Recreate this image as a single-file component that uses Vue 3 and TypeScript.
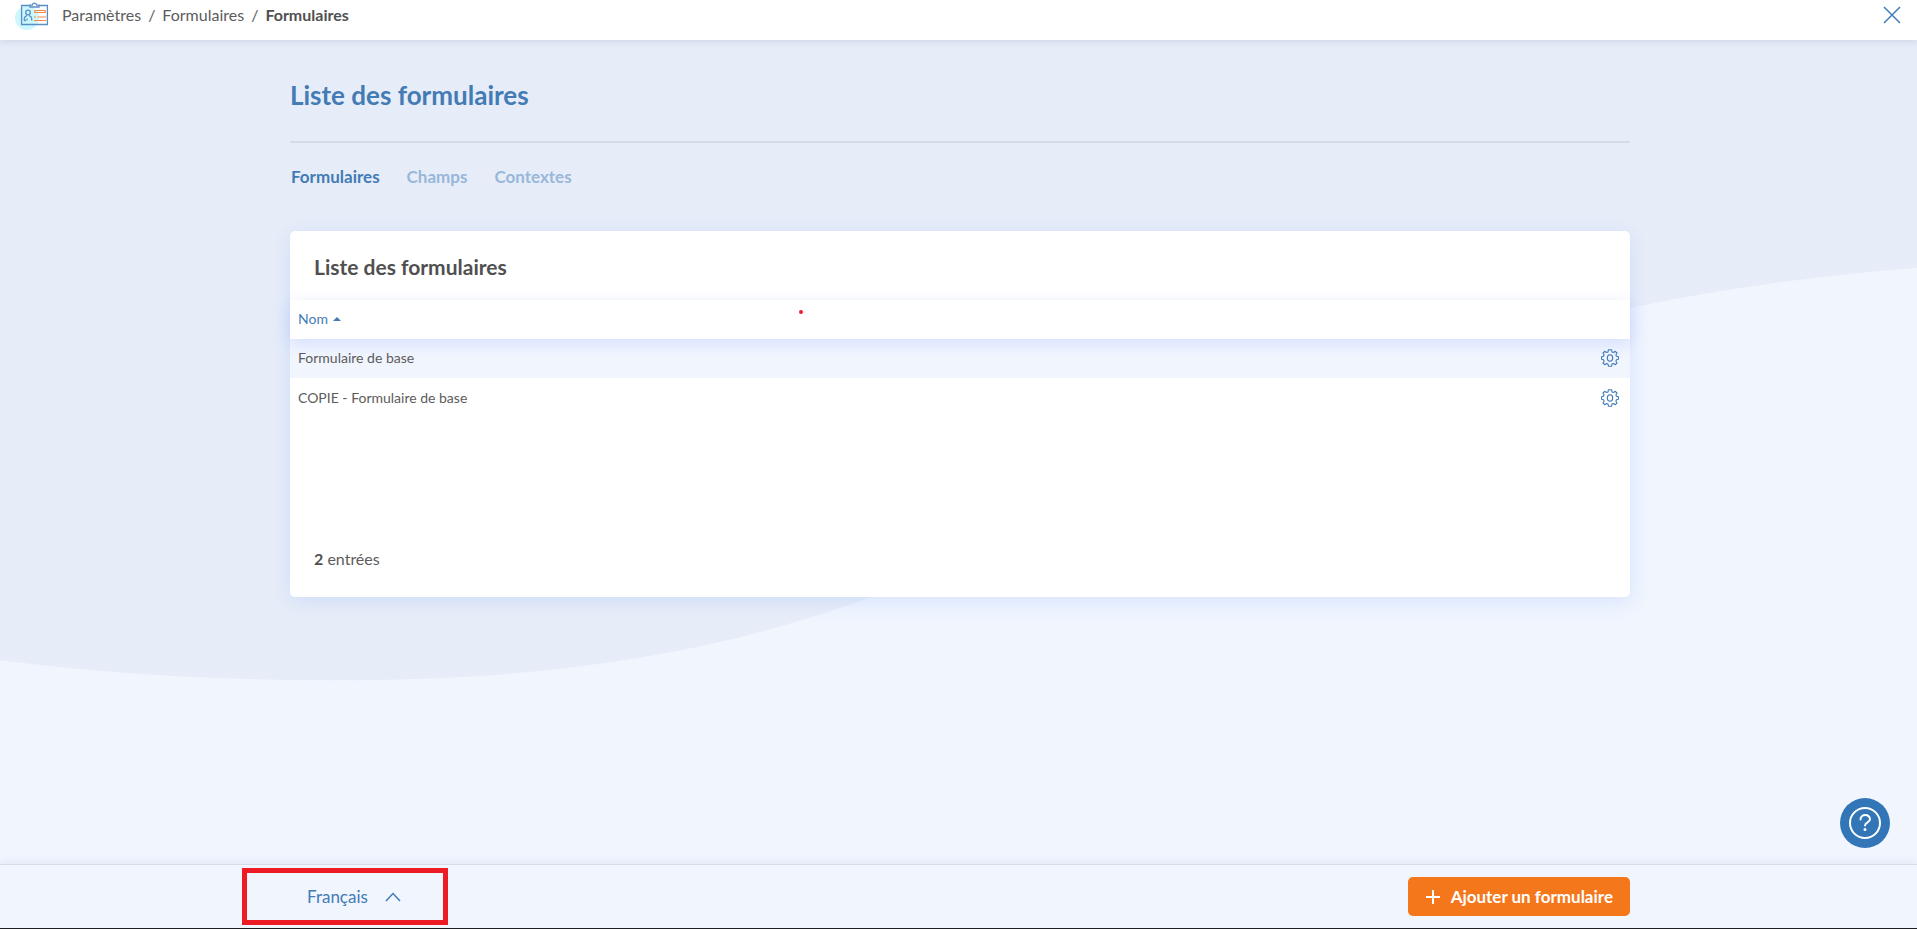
<script setup lang="ts">
import { ref, computed } from 'vue'

interface FormEntry {
  id: number
  name: string
}

const crumbs: string[] = ['Paramètres', 'Formulaires']
const tabs: string[] = ['Formulaires', 'Champs', 'Contextes']
const activeTab = ref<string>('Formulaires')
const language = ref<string>('fr')
const ascending = ref<boolean>(true)

const forms = ref<FormEntry[]>([
  { id: 1, name: 'Formulaire de base' },
  { id: 2, name: 'COPIE - Formulaire de base' },
])

const rows = computed<FormEntry[]>(() =>
  [...forms.value].sort((a, b) => (ascending.value ? a.id - b.id : b.id - a.id)),
)
</script>

<template>
  <div class="page">
    <svg class="wave" viewBox="0 0 1917 929" preserveAspectRatio="none" aria-hidden="true">
      <path d="M0 0H1917V268C1820 276 1727 288 1631 308C1330 371 1120 505 873 597C690 665 510 681 333 681C220 681 110 675 0 661Z" />
    </svg>

    <header class="topbar">
      <svg class="logo" viewBox="0 0 34 30" aria-hidden="true">
        <circle cx="12" cy="18" r="12" fill="#cdf6fd" />
        <g fill="none" stroke="#5a8fc6" stroke-width="1.3">
          <path d="M15 5.500H6.600V24.500H32.400V5.500H24" />
          <path d="M15 7V5.200H17.200C17.600 2.400 21.400 2.400 21.800 5.200H24V7Z" />
          <circle cx="13" cy="12.500" r="2.300" />
          <path d="M9.300 20.500V18.500C9.300 16.500 11 16 12 15.600M16.700 20.500V18.500C16.700 16.500 15 16 14 15.600M12 18.500V20.500M9.300 20.500H11" />
        </g>
        <g fill="none" stroke="#f58b43" stroke-width="1.200">
          <rect x="19.500" y="10.500" width="11" height="2" rx="1" />
          <path d="M19 17H21M22.500 17H31M19 20.500H31" />
        </g>
      </svg>
      <nav class="crumbs" aria-label="Fil d'Ariane">
        <template v-for="crumb in crumbs" :key="crumb">
          <a href="#">{{ crumb }}</a>
          <span>/</span>
        </template>
        <strong aria-current="page">Formulaires</strong>
      </nav>
      <button class="close" type="button" aria-label="Fermer">
        <svg viewBox="0 0 18 18" aria-hidden="true"><path d="M1 1L17 17M17 1L1 17" /></svg>
      </button>
    </header>

    <main class="content">
      <h1>Liste des formulaires</h1>
      <nav class="tabs" aria-label="Sections">
        <button
          v-for="tab in tabs"
          :key="tab"
          type="button"
          :class="{ active: tab === activeTab }"
          @click="activeTab = tab"
        >{{ tab }}</button>
      </nav>

      <section class="card">
        <h2>Liste des formulaires</h2>
        <table>
          <thead>
            <tr>
              <th scope="col" colspan="2">
                <button class="sort" type="button" @click="ascending = !ascending">
                  Nom
                  <svg viewBox="0 0 8 4" aria-hidden="true"><path d="M0 4L4 0L8 4Z" /></svg>
                </button>
              </th>
            </tr>
          </thead>
          <tbody>
            <tr v-for="row in rows" :key="row.id">
              <td>{{ row.name }}</td>
              <td class="actions">
                <button type="button" :aria-label="'Configurer ' + row.name">
                  <svg viewBox="0 0 18 18" aria-hidden="true">
                    <path d="M7.400 .8H10.600L11 2.900L12.500 3.500L14.300 2.300L16 4L14.900 5.800L15.500 7.200L17.400 7.800V10.200L15.500 10.800L14.900 12.200L16 14L14.300 15.700L12.500 14.500L11 15.100L10.600 17.200H7.400L7 15.100L5.500 14.500L3.700 15.700L2 14L3.100 12.200L2.500 10.800L.6 10.200V7.800L2.500 7.200L3.100 5.800L2 4L3.700 2.300L5.500 3.500L7 2.900Z" />
                    <ellipse cx="9" cy="9" rx="2.700" ry="3.200" />
                  </svg>
                </button>
              </td>
            </tr>
          </tbody>
        </table>
        <p class="count"><strong>{{ rows.length }}</strong> entrées</p>
        <i class="dot"></i>
      </section>
    </main>

    <button class="help" type="button" aria-label="Aide">
      <svg viewBox="0 0 34 34" aria-hidden="true">
        <circle cx="17" cy="17" r="15" />
        <path d="M12.500 13.500C12.500 7.600 22 7.600 22 13.300C22 16.500 17 16.300 17 19.500" />
        <circle class="point" cx="17" cy="23.500" r="1.500" />
      </svg>
    </button>

    <footer class="bottombar">
      <div class="language">
        <select v-model="language" aria-label="Langue">
          <option value="fr">Français</option>
          <option value="en">English</option>
        </select>
        <svg viewBox="0 0 16 10" aria-hidden="true"><path d="M1 9L8 1.500L15 9" /></svg>
      </div>
      <button class="add" type="button">
        <svg viewBox="0 0 14 14" aria-hidden="true"><path d="M7 0V14M0 7H14" /></svg>
        Ajouter un formulaire
      </button>
    </footer>
  </div>
</template>

<style>
body {
  margin: 0;
}
</style>

<style scoped>
.page {
  position: relative;
  z-index: 0;
  box-sizing: border-box;
  display: flex;
  flex-direction: column;
  min-height: 100vh;
  background: #f0f5fe;
  border-bottom: 1px solid #1c1e22;
  color: #5c5c5c;
  font-family: Lato, "Liberation Sans", sans-serif;
  font-size: 16px;
  line-height: 20px;
}

button,
select {
  margin: 0;
  padding: 0;
  border: 0;
  background: none;
  color: inherit;
  font: inherit;
  cursor: pointer;
}

svg {
  display: block;
  flex: none;
}

.wave {
  position: absolute;
  inset: 0;
  z-index: -1;
  width: 100%;
  height: 100%;
  fill: #e7edf8;
}

.topbar {
  display: flex;
  align-items: flex-start;
  box-sizing: border-box;
  height: 40px;
  padding: 0 16px 0 15px;
  background: #fff;
  box-shadow: 0 1px 8px rgba(70, 90, 140, 0.18);
}

.logo {
  width: 34px;
  height: 30px;
}

.crumbs {
  display: flex;
  flex: 1;
  gap: 7px;
  padding: 5px 0 0 13px;
}

.crumbs a {
  color: inherit;
  text-decoration: none;
}

.crumbs strong {
  color: #505050;
}

.close {
  margin-top: 6px;
}

.close svg {
  width: 18px;
  height: 18px;
  fill: none;
  stroke: #3f7cb8;
  stroke-width: 1.5;
}

.content {
  flex: 1;
  padding: 39px 287px 40px 290px;
}

h1 {
  margin: 0;
  padding-bottom: 30px;
  border-bottom: 2px solid #d5dce9;
  color: #437bb5;
  font-size: 26px;
  font-weight: 700;
  line-height: 32px;
}

.tabs {
  display: flex;
  gap: 27px;
  padding: 24px 1px 44px;
}

.tabs button {
  color: #98b7da;
  font-size: 17px;
  font-weight: 700;
  line-height: 20px;
}

.tabs .active {
  color: #437bb5;
}

.card {
  position: relative;
  background: #fff;
  border-radius: 5px;
  box-shadow: 0 4px 20px rgba(100, 150, 255, 0.18);
}

h2 {
  margin: 0;
  padding: 24px 24px 21px;
  color: #505050;
  font-size: 21px;
  font-weight: 700;
  line-height: 24px;
}

table {
  width: 100%;
  border-collapse: collapse;
  font-size: 14px;
}

thead {
  position: relative;
  background: #fff;
  box-shadow: 0 4px 16px rgba(100, 130, 255, 0.2);
}

th {
  height: 38px;
  padding: 0 8px 1px;
  font-weight: 400;
  text-align: left;
}

.sort {
  display: flex;
  align-items: center;
  gap: 5px;
  color: #437bb5;
}

.sort svg {
  width: 8px;
  height: 4px;
  fill: #437bb5;
}

td {
  height: 40px;
  padding: 0 8px;
}

tbody tr:nth-child(odd) {
  background: #f0f5fe;
}

tbody tr:nth-child(odd) td {
  height: 38px;
  padding-bottom: 1px;
}

.actions {
  width: 24px;
  padding: 0 11px;
}

.actions button {
  display: block;
  margin-left: auto;
}

.actions svg {
  width: 18px;
  height: 18px;
  fill: none;
  stroke: #437bb5;
  stroke-width: 1.1;
  stroke-linejoin: round;
}

.count {
  margin: 0;
  padding: 131px 24px 28px;
}

.count strong {
  color: #505050;
}

.dot {
  position: absolute;
  top: 79px;
  left: 509px;
  width: 4px;
  height: 4px;
  border-radius: 50%;
  background: #ed1c24;
}

.help {
  position: absolute;
  right: 27px;
  bottom: 80px;
  display: grid;
  place-items: center;
  width: 50px;
  height: 50px;
  border-radius: 50%;
  background: #3276b7;
}

.help svg {
  width: 34px;
  height: 34px;
  fill: none;
  stroke: #fff;
  stroke-width: 2;
  stroke-linecap: round;
}

.help .point {
  fill: #fff;
  stroke: none;
}

.bottombar {
  display: flex;
  align-items: center;
  justify-content: space-between;
  box-sizing: border-box;
  height: 64px;
  padding: 0 287px 0 242px;
  border-top: 1px solid #d5dbe8;
  background: #f0f5fe;
  box-shadow: 0 -2px 8px rgba(70, 90, 140, 0.08);
}

.language {
  display: flex;
  align-items: center;
  box-sizing: border-box;
  width: 206px;
  height: 57px;
  padding-left: 60px;
  border: 5px solid #ed1c24;
  color: #437bb5;
}

.language select {
  width: 78px;
  appearance: none;
  font-size: 17px;
}

.language svg {
  width: 16px;
  height: 10px;
  fill: none;
  stroke: #437bb5;
  stroke-width: 1.5;
  pointer-events: none;
}

.add {
  display: flex;
  align-items: center;
  gap: 11px;
  height: 39px;
  padding: 0 17px 0 18px;
  border-radius: 5px;
  background: #f5771b;
  color: #fff;
  font-size: 17px;
  font-weight: 700;
}

.add svg {
  width: 14px;
  height: 14px;
  stroke: #fff;
  stroke-width: 2;
}
</style>
